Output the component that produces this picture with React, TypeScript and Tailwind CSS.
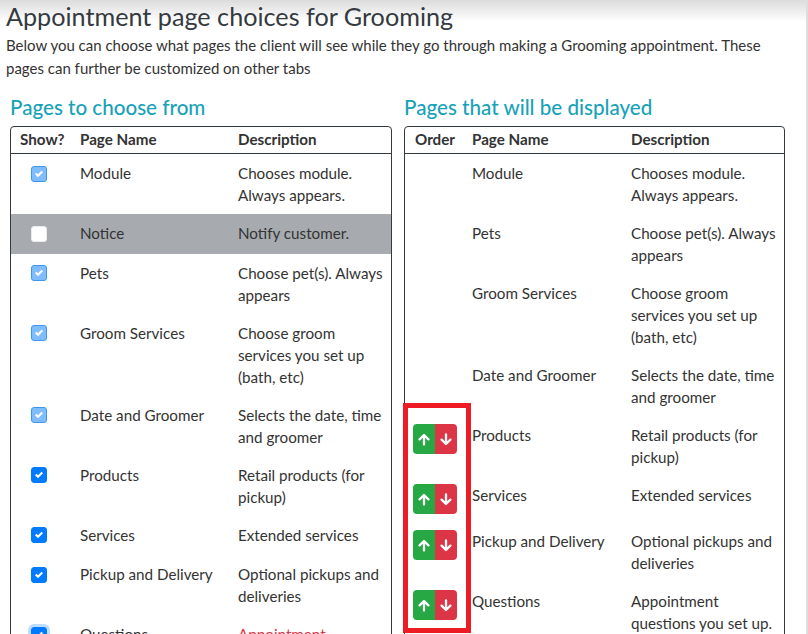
type Box = 'muted' | 'off' | 'on' | 'focus';

type LeftRow = {
  name: string;
  desc: string[];
  box: Box;
  shaded?: boolean;
  red?: boolean;
};

type RightRow = {
  name: string;
  desc: string[];
  move?: boolean;
};

const leftRows: LeftRow[] = [
  { name: 'Module', desc: ['Chooses module.', 'Always appears.'], box: 'muted' },
  { name: 'Notice', desc: ['Notify customer.'], box: 'off', shaded: true },
  { name: 'Pets', desc: ['Choose pet(s). Always', 'appears'], box: 'muted' },
  { name: 'Groom Services', desc: ['Choose groom', 'services you set up', '(bath, etc)'], box: 'muted' },
  { name: 'Date and Groomer', desc: ['Selects the date, time', 'and groomer'], box: 'muted' },
  { name: 'Products', desc: ['Retail products (for', 'pickup)'], box: 'on' },
  { name: 'Services', desc: ['Extended services'], box: 'on' },
  { name: 'Pickup and Delivery', desc: ['Optional pickups and', 'deliveries'], box: 'on' },
  { name: 'Questions', desc: ['Appointment', 'questions you set up.'], box: 'focus', red: true },
];

const rightRows: RightRow[] = [
  { name: 'Module', desc: ['Chooses module.', 'Always appears.'] },
  { name: 'Pets', desc: ['Choose pet(s). Always', 'appears'] },
  { name: 'Groom Services', desc: ['Choose groom', 'services you set up', '(bath, etc)'] },
  { name: 'Date and Groomer', desc: ['Selects the date, time', 'and groomer'] },
  { name: 'Products', desc: ['Retail products (for', 'pickup)'], move: true },
  { name: 'Services', desc: ['Extended services'], move: true },
  { name: 'Pickup and Delivery', desc: ['Optional pickups and', 'deliveries'], move: true },
  { name: 'Questions', desc: ['Appointment', 'questions you set up.'], move: true },
];

function Check() {
  return (
    <svg width="8" height="8" viewBox="0 0 8 8">
      <path fill="#fff" d="M6.564.75l-3.59 3.612-1.538-1.55L0 4.26l2.974 2.99L8 2.193z" />
    </svg>
  );
}

function Checkbox({ kind }: { kind: Box }) {
  if (kind === 'off') {
    return <span className="flex w-4 h-4 rounded-[3px] bg-white border border-[#e9ecef]" />;
  }
  if (kind === 'muted') {
    return (
      <span className="flex items-center justify-center w-4 h-4 rounded-[3px] bg-[#80bdff] border border-[#3f95f5]">
        <Check />
      </span>
    );
  }
  return (
    <span
      className={
        'flex items-center justify-center w-4 h-4 rounded-[3px] bg-[#007bff] border border-[#007bff]' +
        (kind === 'focus' ? ' shadow-[0_0_0_3px_rgba(0,123,255,0.25)]' : '')
      }
    >
      <Check />
    </span>
  );
}

function Arrow({ down }: { down?: boolean }) {
  return (
    <svg width="12" height="13" viewBox="0 0 12 13" className={down ? 'rotate-180' : ''}>
      <path
        d="M6 11.5V2.2M1.6 6.4L6 2l4.4 4.4"
        fill="none"
        stroke="#fff"
        strokeWidth="2.3"
        strokeLinecap="round"
        strokeLinejoin="round"
      />
    </svg>
  );
}

function MoveButtons() {
  return (
    <div className="flex h-[30px] w-[44px] rounded-[4px] overflow-hidden">
      <button className="flex-1 flex items-center justify-center bg-[#28a745]">
        <Arrow />
      </button>
      <button className="flex-1 flex items-center justify-center bg-[#dc3545]">
        <Arrow down />
      </button>
    </div>
  );
}

function Lines({ lines, red }: { lines: string[]; red?: boolean }) {
  return (
    <div className={'whitespace-nowrap' + (red ? ' text-[#dc3545]' : '')}>
      {lines.map((l) => (
        <div key={l}>{l}</div>
      ))}
    </div>
  );
}

export default function App() {
  return (
    <div className="relative w-[808px] h-[634px] overflow-hidden bg-white flex font-['Lato',sans-serif] text-[#333] text-[15.2px] leading-[22px]">
      {/* top shadow, behind the page */}
      <div className="absolute inset-x-0 top-0 h-[22px] bg-linear-to-b from-[#dcdcdc] to-transparent pointer-events-none" />

      {/* page */}
      <div className="relative flex-1 pl-[6px] pt-[2px]">
        <h1 className="text-[25.2px] leading-[28px] font-normal text-[#343a40]">
          Appointment page choices for Grooming
        </h1>
        <p className="mt-[4px] text-[15px] leading-[22.5px] whitespace-nowrap">
          Below you can choose what pages the client will see while they go through making a Grooming appointment. These
          <br />
          pages can further be customized on other tabs
        </p>

        <div className="grid grid-cols-[382px_381px] gap-[12px] ml-[4px] mt-[16px]">
          {/* left */}
          <section>
            <h2 className="text-[20.6px] leading-[24px] font-medium text-[#17a2b8] mb-[7px]">Pages to choose from</h2>
            <div className="border border-[#343a40] rounded-[4px]">
              <div className="grid grid-cols-[59px_158px_1fr] font-bold border-b border-[#343a40]">
                <div className="px-[9px] pt-[1px] pb-[3px]">Show?</div>
                <div className="px-[10px] pt-[1px] pb-[3px]">Page Name</div>
                <div className="px-[10px] pt-[1px] pb-[3px]">Description</div>
              </div>
              {leftRows.map((r) => (
                <div
                  key={r.name}
                  className={'grid grid-cols-[59px_158px_1fr]' + (r.shaded ? ' bg-[#a7abaf]' : '')}
                >
                  <div className="py-2 flex justify-center pr-[3px]">
                    <div className="h-[23.5px] flex items-center">
                      <Checkbox kind={r.box} />
                    </div>
                  </div>
                  <div className="px-[10px] py-2 whitespace-nowrap">{r.name}</div>
                  <div className="px-[10px] py-2">
                    <Lines lines={r.desc} red={r.red} />
                  </div>
                </div>
              ))}
            </div>
          </section>

          {/* right */}
          <section>
            <h2 className="text-[20.6px] leading-[24px] font-medium text-[#17a2b8] mb-[7px]">
              Pages that will be displayed
            </h2>
            <div className="border border-[#343a40] rounded-[4px]">
              <div className="grid grid-cols-[57px_159px_1fr] font-bold border-b border-[#343a40]">
                <div className="px-[10px] pt-[1px] pb-[3px]">Order</div>
                <div className="px-[10px] pt-[1px] pb-[3px]">Page Name</div>
                <div className="px-[10px] pt-[1px] pb-[3px]">Description</div>
              </div>
              {rightRows.map((r) => (
                <div key={r.name} className="grid grid-cols-[57px_159px_1fr]">
                  <div className="pl-[8px] py-2">{r.move && <MoveButtons />}</div>
                  <div className="px-[10px] py-2 whitespace-nowrap">{r.name}</div>
                  <div className="px-[10px] py-2">
                    <Lines lines={r.desc} />
                  </div>
                </div>
              ))}
            </div>
          </section>
        </div>
      </div>

      {/* scrollbar edge */}
      <div className="relative w-[2px] bg-[#dedede]" />

      {/* annotation */}
      <div className="absolute left-[403px] top-[403px] w-[68px] h-[230px] border-[5px] border-[#ed1c24] pointer-events-none" />
    </div>
  );
}
